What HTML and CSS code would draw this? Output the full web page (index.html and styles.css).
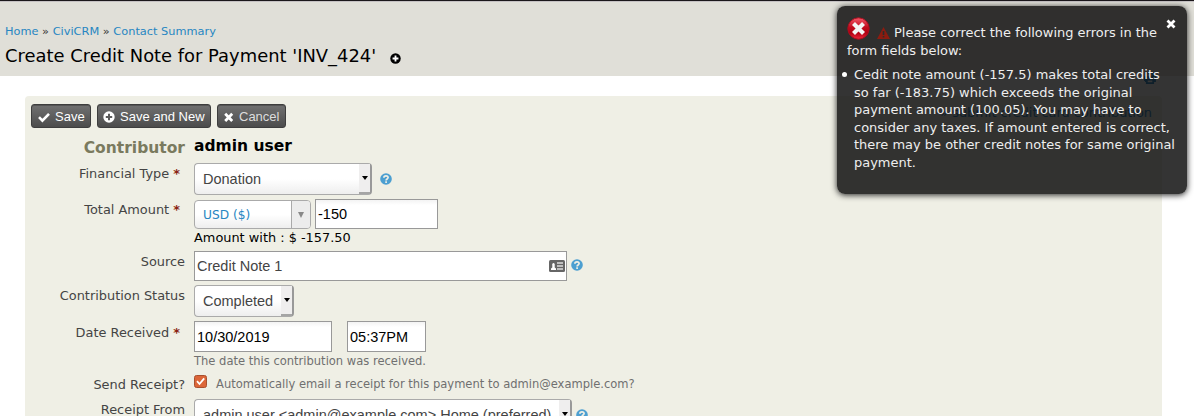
FILE: index.html
```html
<!DOCTYPE html>
<html lang="en">
<head>
<meta charset="utf-8">
<title>Create Credit Note</title>
<link rel="stylesheet" href="styles.css">
</head>
<body>
<svg width="0" height="0" class="defs">
  <symbol id="help" viewBox="0 0 12 12"><circle cx="6" cy="6" r="5.8" fill="#4c9fd1"/><path d="M3.9 4.8C3.9 2.2 8.1 2.2 8.1 4.6C8.1 6 6.1 5.9 6.1 7.4M6.1 8.3V10" fill="none" stroke="#efefe5" stroke-width="1.7"/></symbol>
  <symbol id="plus" viewBox="0 0 12 12"><circle cx="6" cy="6" r="5.7" fill="currentColor"/><path d="M6 2.8V9.2M2.8 6H9.2" stroke="var(--cut)" stroke-width="2"/></symbol>
</svg>
<header class="header">
  <nav class="crumbs"><a>Home</a> » <a>CiviCRM</a> » <a>Contact Summary</a></nav>
  <div class="title-row"><h1>Create Credit Note for Payment 'INV_424'</h1><svg class="title-plus"><use href="#plus"/></svg></div>
</header>
<div class="print-row"><svg class="print" viewBox="0 0 12 12"><path d="M2.8 5V.8H9.2V5M1 9V5.2H11V9H9.2M1 9H2.8M2.8 7.5H9.2V11.2H2.8z" fill="none" stroke="#0071bd" stroke-width="1.8"/></svg></div>
<main class="panel">
  <div class="toolbar">
    <div class="buttons">
      <button class="btn save"><svg viewBox="0 0 12 12"><path d="M1 6.2L4.4 9.7L11 2.8" fill="none" stroke="#fff" stroke-width="2.6"/></svg>Save</button>
      <button class="btn savenew"><svg viewBox="0 0 12 12"><use href="#plus"/></svg>Save and New</button>
      <button class="btn cancel"><svg viewBox="0 0 12 12"><path d="M2.2 2.7L9.2 9.9M9.2 2.7L2.2 9.9" stroke="#fff" stroke-width="2.8"/></svg>Cancel</button>
    </div>
    <a class="card-link">» submit credit card contribution</a>
  </div>
  <div class="row r-contrib"><label class="big">Contributor</label><strong>admin user</strong></div>
  <div class="row r-type"><label>Financial Type <b>*</b></label><div class="select w-type"><span>Donation</span><i></i></div><svg class="help"><use href="#help"/></svg></div>
  <div class="row r-total"><label>Total Amount <b>*</b></label><div class="currency"><span>USD ($)</span><i></i></div><div class="input w-amount">-150</div></div>
  <div class="row r-tax"><label></label><span>Amount with : $ -157.50</span></div>
  <div class="row r-source"><label>Source</label><div class="input w-source"><span>Credit Note 1</span><svg class="card" viewBox="0 0 16 12"><rect width="16" height="12" rx="1.5" fill="#666"/><path d="M2 10V8.5L3.3 7.6V5.8C2.5 2 6.5 2 5.7 5.8V7.6L7 8.5V10z" fill="#fff"/><path d="M8 3h6M8 6h6M8 9h6" stroke="#ddd" stroke-width="1.3"/></svg></div><svg class="help"><use href="#help"/></svg></div>
  <div class="row r-status"><label>Contribution Status</label><div class="select w-status"><span>Completed</span><i></i></div></div>
  <div class="row r-date"><label>Date Received <b>*</b></label><div class="input w-date">10/30/2019</div><div class="input w-time">05:37PM</div></div>
  <div class="row r-desc"><label></label><span>The date this contribution was received.</span></div>
  <div class="row r-send"><label>Send Receipt?</label><svg class="check" viewBox="0 0 13 13"><rect x=".5" y=".5" width="12" height="12" rx="2" fill="#dc6638" stroke="#a8502f"/><path d="M3 6.2L5.5 9L10.2 3.4" fill="none" stroke="#fff" stroke-width="1.8"/></svg><span>Automatically email a receipt for this payment to admin@example.com?</span></div>
  <div class="row r-from"><label>Receipt From</label><div class="select w-from"><span>admin user &lt;admin@example.com&gt; Home (preferred)</span><i></i></div><svg class="help"><use href="#help"/></svg></div>
</main>
<aside class="toast">
  <svg class="close" viewBox="0 0 10 10"><path d="M1.5 1.5L8.5 8.5M8.5 1.5L1.5 8.5" stroke="#fff" stroke-width="2.8"/></svg>
  <div class="toast-head">
    <svg class="error" viewBox="0 0 23 23"><defs><linearGradient id="rg" x2="0" y2="1"><stop stop-color="#f5596a"/><stop offset=".45" stop-color="#c00a1c"/><stop offset=".7" stop-color="#b00012"/><stop offset="1" stop-color="#f0283c"/></linearGradient></defs><circle cx="11.5" cy="11.5" r="10.7" fill="url(#rg)" stroke="#a80e1e"/><path d="M6.5 6.5L16.5 16.5M16.5 6.5L6.5 16.5" stroke="#f4f4f4" stroke-width="4.2"/></svg><svg class="warn" viewBox="0 0 13 12"><path d="M6.5 0L13 12H0z" fill="#8b1c10"/><path d="M6.5 4V8M6.5 9V10.5" stroke="#2e2c2a" stroke-width="1.6"/></svg><span>Please correct the following errors in the</span><br><span>form fields below:</span>
  </div>
  <ul><li>Cedit note amount (-157.5) makes total credits<br>so far (-183.75) which exceeds the original<br>payment amount (100.05). You may have to<br>consider any taxes. If amount entered is correct,<br>there may be other credit notes for same original<br>payment.</li></ul>
</aside>
</body>
</html>
```
FILE: styles.css
```css
* { box-sizing: border-box; }
body { margin: 0; height: 416px; overflow: hidden; background: #fff; font: 12.9px/16px "DejaVu Sans", sans-serif; color: #000; }
.defs { position: absolute; }
.header { height: 76px; background: #e0dfd8; border-top: 1px solid #1b171b; box-shadow: inset 0 1px #c5c1c3; padding: 22px 5px 0; }
.crumbs { font-size: 11.35px; line-height: 16px; color: #333; }
.crumbs a { color: #2786c2; }
.title-row { display: flex; align-items: center; margin-top: 6px; }
h1 { margin: 0; font-size: 17.92px; line-height: 22px; font-weight: 400; white-space: nowrap; }
.title-plus { --cut: #fff; width: 11px; height: 11px; margin: 4px 0 0 14px; }
.print-row { height: 20px; padding-right: 38px; display: flex; justify-content: flex-end; }
.print { width: 12px; height: 12px; margin-top: -4px; }
.panel { width: 1137px; height: 330px; margin-left: 25px; padding: 8px 10px 0 6px; background: #efefe5; border-radius: 4px 4px 0 0; overflow: hidden; }
.toolbar { display: flex; justify-content: space-between; height: 33px; }
.buttons { display: flex; gap: 6px; }
.btn { --cut: #5c5c5c; display: flex; align-items: center; height: 24px; padding: 1px 0 0 6px; border: 1px solid #3e3e3e; border-radius: 3px; color: #fff; background: linear-gradient(#717171, #4c4c4c); font: 13px/20px "Liberation Sans", sans-serif; white-space: nowrap; box-shadow: inset 0 1px #555; }
.btn svg { width: 12px; height: 12px; margin-right: 5px; }
.save { width: 60px; }
.savenew { width: 114px; padding-left: 5px; }
.cancel { width: 69px; padding-left: 5px; color: #ddd; }
.cancel svg { margin-right: 4px; }
.card-link { margin-top: 1px; color: #0071bd; }
.row { display: flex; align-items: flex-start; white-space: nowrap; }
.row label { flex: none; width: 154px; margin-right: 9px; text-align: right; color: #444; }
.row label b { color: #8a1f11; margin-right: 5px; }
.row .big { font-size: 15.5px; line-height: 22px; font-weight: 700; color: #7a7a5e; }
.r-contrib { height: 26px; }
.r-contrib strong { font-size: 15.5px; line-height: 18px; }
.r-type { height: 36px; }
.r-type label, .r-total label { padding-top: 3px; }
.r-total { height: 31px; }
.r-tax { height: 21px; }
.r-source { height: 34px; }
.r-source label { padding-top: 3px; }
.r-status { height: 36px; }
.r-status label { padding-top: 3px; }
.r-date { height: 32px; }
.r-date label { padding-top: 4px; }
.r-desc { height: 22px; color: #707070; font-size: 11.52px; }
.r-send { height: 24px; }
.r-send span { margin: 1px 0 0 9px; color: #707070; font-size: 11.52px; }
.r-send label { padding-top: 2px; }
.r-from label { padding-top: 3px; }
.check { width: 13px; height: 13px; }
.help { width: 12px; height: 12px; margin: 10px 0 0 8px; }
.r-source .help { margin: 8px 0 0 4px; }
.select { display: flex; justify-content: space-between; height: 32px; padding-left: 8px; border: 1px solid #aaa; border-right: 2px solid #999; border-radius: 4px; background: linear-gradient(#fff 50%, #eee); color: #444; font: 14.5px/31px "Liberation Sans", sans-serif; }
.select i { width: 11px; height: 30px; background: #efeeee; border-bottom: 2px solid #a5a5a5; display: flex; align-items: center; justify-content: center; }
.select i::before { content: ""; border: 3px solid transparent; border-top: 4px solid #000; border-bottom: 0; }
.w-type { width: 178px; }
.w-status { width: 100px; }
.w-from { width: 378px; }
.r-from .help { margin-left: 4px; }
.currency { display: flex; justify-content: space-between; width: 117px; height: 29px; margin-top: 1px; padding-left: 8px; border: 1px solid #aaa; border-radius: 4px; background: linear-gradient(#fff 50%, #eee); color: #2786c2; font-size: 12.2px; line-height: 28px; overflow: hidden; }
.currency i { width: 19px; background: #ececec; border-left: 1px solid #aaa; display: flex; align-items: center; justify-content: center; }
.currency i::before { content: ""; border: 3.5px solid transparent; border-top: 6px solid #888; border-bottom: 0; }
.input { height: 30px; border: 1px solid #999; padding-left: 2px; background: linear-gradient(#f3f3f3, #fff 5px); font: 14.5px/29px "Liberation Sans", sans-serif; }
.w-amount { width: 123px; margin-left: 4px; }
.w-source { width: 373px; display: flex; justify-content: space-between; align-items: center; padding-right: 1px; color: #444; background: #fff; }
.card { width: 16px; height: 12px; }
.w-date, .w-time { height: 31px; line-height: 30px; }
.w-date { width: 138px; }
.w-time { width: 79px; margin-left: 15px; }
.toast { position: absolute; left: 837px; top: 6px; width: 350px; height: 188px; border-radius: 8px; background: rgba(16, 16, 16, .85); box-shadow: 0 1px 6px #222; color: #eee; padding: 11px 0 0 10px; font-size: 12.98px; line-height: 18px; white-space: nowrap; }
.close { position: absolute; right: 11px; top: 13px; width: 10px; height: 10px; }
.toast-head { height: 49px; }
.error { width: 23px; height: 23px; vertical-align: -3px; }
.warn { width: 13px; height: 12px; margin: 0 4px 0 7px; vertical-align: -2px; }
.toast ul { margin: 0; padding: 0 0 0 7px; line-height: 17.6px; list-style: none; }
.toast li::before { content: ""; position: absolute; left: 5px; top: 66px; width: 5px; height: 5px; border-radius: 50%; background: #fff; }
```
